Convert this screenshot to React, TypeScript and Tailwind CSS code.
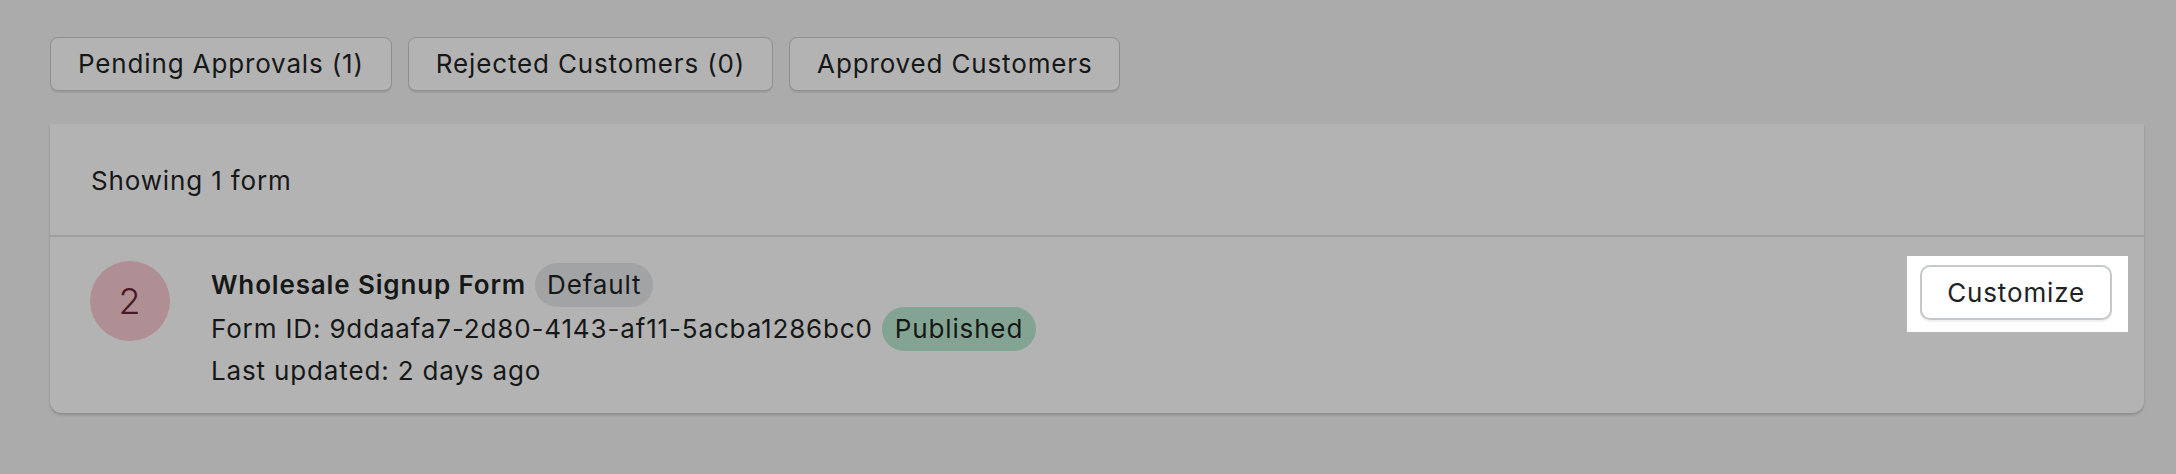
import { useState } from "react";

const TABS = ["Pending Approvals (1)", "Rejected Customers (0)", "Approved Customers"];

export default function App() {
  const [active, setActive] = useState(0);

  return (
    <div
      className="min-h-[474px] bg-[#ababab] pt-[37px] pl-[50px] pr-[32px] text-[#161818] tracking-[0.85px]"
      style={{ fontFamily: "Inter, 'Noto Sans', sans-serif" }}
    >
      {/* Tabs */}
      <div className="flex gap-[16px]">
        {TABS.map((t, i) => (
          <button
            key={t}
            onClick={() => setActive(i)}
            className={`h-[54px] px-[27px] rounded-[8px] border border-[#8e8f91] bg-[#b3b3b3] text-[26px] leading-[40px] shadow-[0_2px_0_rgba(0,0,0,0.08)] ${
              active === i ? "text-[#161818]" : "text-[#161818]"
            }`}
          >
            {t}
          </button>
        ))}
      </div>

      {/* Forms card */}
      <div className="mt-[33px] bg-[#b3b3b3] rounded-b-[12px] shadow-[0_2px_3px_rgba(0,0,0,0.18)]">
        <div className="h-[113px] flex items-center px-[41px] pt-[2px] border-b-2 border-[#9e9fa0]">
          <span className="text-[26px] leading-[40px]">Showing 1 form</span>
        </div>

        <div className="flex items-start pt-[24px] pb-[22px] pl-[40px] pr-[16px]">
          <div className="w-[80px] h-[80px] rounded-full bg-[#b08f94] flex items-center justify-center text-[36px] font-light text-[#4a1a24] shrink-0">
            2
          </div>

          <div className="ml-[41px] pt-[2px] flex-1 text-[26px] leading-[40px]">
            <div className="flex items-center h-[44px] gap-[9px]">
              <span className="font-semibold">Wholesale Signup Form</span>
              <span className="px-[12px] py-[2px] rounded-full bg-[#a2a3a5]">Default</span>
            </div>
            <div className="flex items-center h-[44px] gap-[9px]">
              <span>Form ID: 9ddaafa7-2d80-4143-af11-5acba1286bc0</span>
              <span className="px-[13px] py-[2px] rounded-full bg-[#83a492]">Published</span>
            </div>
            <div>Last updated: 2 days ago</div>
          </div>

          {/* spotlight on the Customize action */}
          <div className="-mt-[5px] bg-white pt-[9px] pb-[12px] pl-[13px] pr-[16px]">
            <button className="h-[55px] px-[25px] rounded-[10px] border-2 border-[#c4c7cb] bg-white text-[26px] text-[#202223] shadow-[0_2px_0_rgba(0,0,0,0.06)]">
              Customize
            </button>
          </div>
        </div>
      </div>
    </div>
  );
}
